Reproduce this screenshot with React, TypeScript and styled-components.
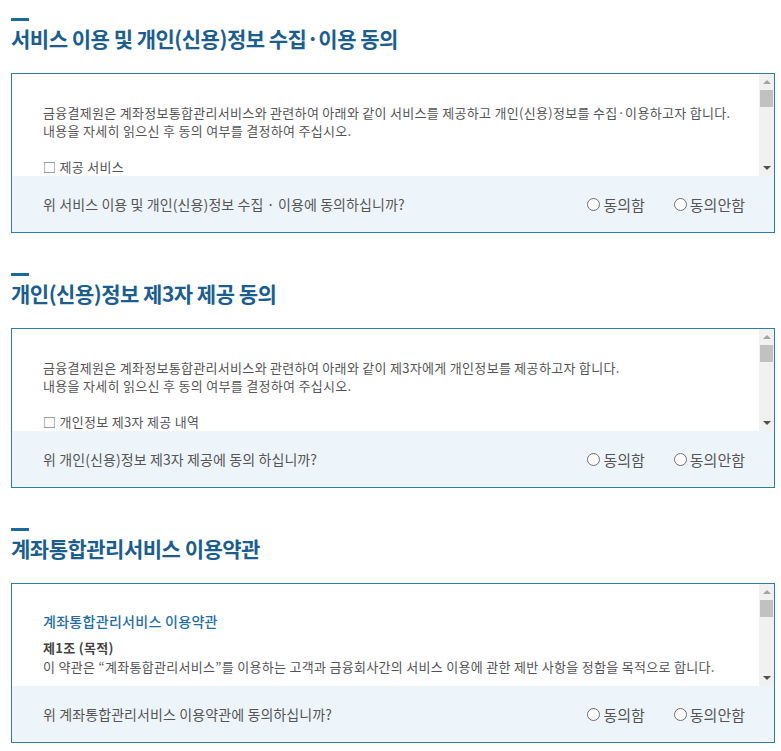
import styled, { createGlobalStyle } from 'styled-components';

const GlobalStyle = createGlobalStyle`
  body {
    margin: 0;
    background: #fff;
    font-family: 'Noto Sans CJK KR', 'Noto Sans', sans-serif;
    color: #555;
  }
`;

const Page = styled.div`
  padding: 18px 6px 20px 11px;
  display: flex;
  flex-direction: column;
  gap: 40px;
`;

const Section = styled.section`
  display: flex;
  flex-direction: column;
`;

const Heading = styled.h2`
  margin: 0 0 20px;
  font-size: 21px;
  font-weight: 700;
  line-height: 30px;
  color: #1b5e8d;
  letter-spacing: -0.5px;

  &::before {
    content: '';
    display: block;
    width: 18px;
    height: 3px;
    margin-bottom: 2px;
    background: #1b6a9c;
  }
`;

const Box = styled.div`
  border: 1px solid #2f7f9b;
  height: 158px;
  display: flex;
  flex-direction: column;
`;

const ScrollArea = styled.div`
  height: 102px;
  display: flex;
  overflow: hidden;
`;

const ScrollContent = styled.div`
  flex: 1;
  padding: 30px 16px 0 31px;
  font-size: 13px;
  line-height: 18px;
  letter-spacing: 0.3px;
  color: #555;
`;

const Line = styled.p`
  margin: 0;
`;

const Blank = styled.div`
  height: 18px;
`;

const TermsTitle = styled.h3`
  margin: -2px 0 9px;
  font-size: 14px;
  font-weight: 500;
  line-height: 18px;
  color: #1f6ea3;
`;

const Article = styled.h4`
  margin: 0 0 1px;
  font-size: 13px;
  font-weight: 700;
  line-height: 18px;
  color: #444;
`;

const Scrollbar = styled.div`
  width: 15px;
  flex-shrink: 0;
  display: flex;
  flex-direction: column;
  background: #f1f1f1;
`;

const Arrow = styled.div<{ $dir: 'up' | 'down' }>`
  height: 16px;
  flex-shrink: 0;
  display: flex;
  align-items: center;
  justify-content: center;

  &::after {
    content: '';
    border-left: 4px solid transparent;
    border-right: 4px solid transparent;
    ${({ $dir }) =>
      $dir === 'up'
        ? 'border-bottom: 4px solid #a3a3a3;'
        : 'border-top: 4px solid #505050;'}
  }
`;

const Thumb = styled.div`
  height: 17px;
  flex-shrink: 0;
  margin: 0 1px;
  background: #c1c1c1;
`;

const Track = styled.div`
  flex: 1;
`;

const AnswerBar = styled.div`
  flex: 1;
  display: flex;
  align-items: center;
  justify-content: space-between;
  padding: 0 29px 0 31px;
  background: #eef5fa;
`;

const Question = styled.p`
  margin: 0;
  font-size: 14px;
  letter-spacing: 0.1px;
  color: #555;
`;

const Options = styled.div`
  display: flex;
  gap: 29px;
`;

const Option = styled.label`
  display: flex;
  align-items: center;
  gap: 3px;
  font-size: 15px;
  color: #555;
  cursor: pointer;
`;

const Radio = styled.input`
  appearance: none;
  margin: 0;
  width: 13px;
  height: 13px;
  border: 1px solid #6f6f6f;
  border-radius: 50%;
  background: #fff;

  &:checked {
    background: radial-gradient(circle, #333 35%, #fff 40%);
  }
`;

type AgreementItem = {
  id: string;
  title: string;
  question: string;
  body: React.ReactNode;
};

const Intro = ({ lines, item }: { lines: string[]; item: string }) => (
  <>
    {lines.map((line) => (
      <Line key={line}>{line}</Line>
    ))}
    <Blank />
    <Line>□ {item}</Line>
  </>
);

const items: AgreementItem[] = [
  {
    id: 'collect',
    title: '서비스 이용 및 개인(신용)정보 수집·이용 동의',
    question: '위 서비스 이용 및 개인(신용)정보 수집 · 이용에 동의하십니까?',
    body: (
      <Intro
        lines={[
          '금융결제원은 계좌정보통합관리서비스와 관련하여 아래와 같이 서비스를 제공하고 개인(신용)정보를 수집·이용하고자 합니다.',
          '내용을 자세히 읽으신 후 동의 여부를 결정하여 주십시오.',
        ]}
        item="제공 서비스"
      />
    ),
  },
  {
    id: 'third',
    title: '개인(신용)정보 제3자 제공 동의',
    question: '위 개인(신용)정보 제3자 제공에 동의 하십니까?',
    body: (
      <Intro
        lines={[
          '금융결제원은 계좌정보통합관리서비스와 관련하여 아래와 같이 제3자에게 개인정보를 제공하고자 합니다.',
          '내용을 자세히 읽으신 후 동의 여부를 결정하여 주십시오.',
        ]}
        item="개인정보 제3자 제공 내역"
      />
    ),
  },
  {
    id: 'terms',
    title: '계좌통합관리서비스 이용약관',
    question: '위 계좌통합관리서비스 이용약관에 동의하십니까?',
    body: (
      <>
        <TermsTitle>계좌통합관리서비스 이용약관</TermsTitle>
        <Article>제1조 (목적)</Article>
        <Line>
          이 약관은 “계좌통합관리서비스”를 이용하는 고객과 금융회사간의 서비스 이용에 관한 제반 사항을 정함을 목적으로 합니다.
        </Line>
      </>
    ),
  },
];

export default function App() {
  return (
    <>
      <GlobalStyle />
      <Page>
        {items.map((it) => (
          <Section key={it.id}>
            <Heading>{it.title}</Heading>
            <Box>
              <ScrollArea>
                <ScrollContent>{it.body}</ScrollContent>
                <Scrollbar>
                  <Arrow $dir="up" />
                  <Thumb />
                  <Track />
                  <Arrow $dir="down" />
                </Scrollbar>
              </ScrollArea>
              <AnswerBar>
                <Question>{it.question}</Question>
                <Options>
                  <Option>
                    <Radio type="radio" name={it.id} />
                    동의함
                  </Option>
                  <Option>
                    <Radio type="radio" name={it.id} />
                    동의안함
                  </Option>
                </Options>
              </AnswerBar>
            </Box>
          </Section>
        ))}
      </Page>
    </>
  );
}
